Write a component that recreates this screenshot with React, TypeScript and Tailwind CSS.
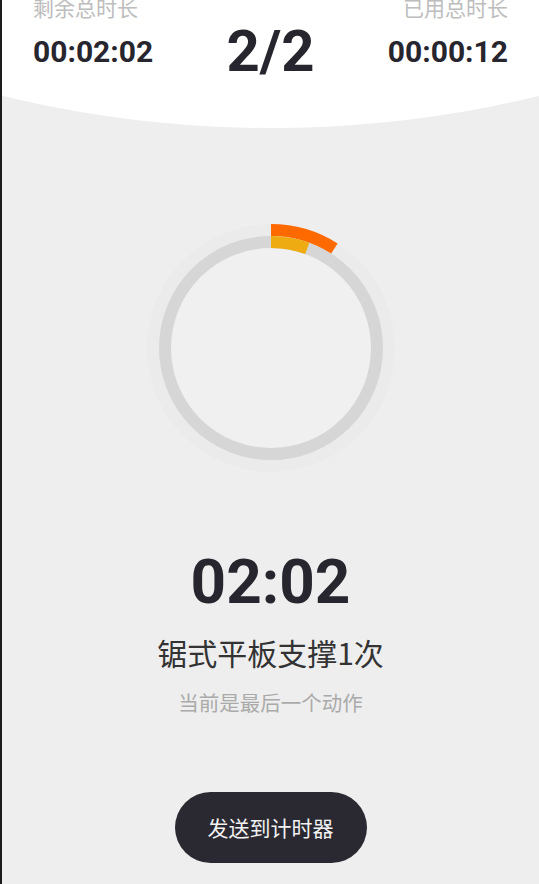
import React from "react";

function Ring() {
  return (
    <svg width="250" height="250" viewBox="0 0 250 250" className="block">
      <circle cx="125" cy="125" r="124" fill="#ebebeb" />
      <circle cx="125" cy="125" r="100" fill="#f0f0f0" />
      <circle cx="125" cy="125" r="106" fill="none" stroke="#d6d6d6" strokeWidth="12" />
      <path d="M125 7 A118 118 0 0 1 188.4 25.5" fill="none" stroke="#ff6a00" strokeWidth="12" />
      <path d="M125 19 A106 106 0 0 1 161.25 25.4" fill="none" stroke="#efac12" strokeWidth="12" />
    </svg>
  );
}

export default function App() {
  return (
    <div className="relative w-[539px] min-h-[884px] overflow-hidden bg-[#eeeeee] border-l-[2px] border-[#1c1c1c]">
      <div className="absolute left-1/2 -translate-x-1/2 top-[-2146px] w-[2274px] h-[2274px] rounded-full bg-white" />
      <div className="relative -mt-[3px] h-[131px] flex justify-between items-start px-[31px]">
        <div className="flex flex-col items-start">
          <div className="text-[21px] leading-[21px] text-[#bdbdbd] font-['Noto_Sans_CJK_SC','Noto_Sans',sans-serif]">剩余总时长</div>
          <div className="mt-[19px] text-[30px] leading-[30px] font-bold text-[#27262e] font-['Roboto','Liberation_Sans',sans-serif]">00:02:02</div>
        </div>
        <div className="mt-[25px] text-[58px] leading-[58px] font-bold text-[#27262e] font-['Roboto','Liberation_Sans',sans-serif]">2/2</div>
        <div className="flex flex-col items-end">
          <div className="text-[21px] leading-[21px] text-[#bdbdbd] font-['Noto_Sans_CJK_SC','Noto_Sans',sans-serif]">已用总时长</div>
          <div className="mt-[19px] text-[30px] leading-[30px] font-bold text-[#27262e] font-['Roboto','Liberation_Sans',sans-serif]">00:00:12</div>
        </div>
      </div>
      <div className="relative flex flex-col items-center">
        <div className="mt-[95px]">
          <Ring />
        </div>
        <div className="mt-[78px] text-[62px] leading-[62px] font-bold text-[#27262e] font-['Roboto','Liberation_Sans',sans-serif]">02:02</div>
        <div className="mt-[24px] text-[30px] leading-[30px] text-[#333333] font-['Noto_Sans_CJK_SC','Noto_Sans',sans-serif]">锯式平板支撑1次</div>
        <div className="mt-[25px] text-[20.5px] leading-[20px] text-[#aaaaaa] font-['Noto_Sans_CJK_SC','Noto_Sans',sans-serif]">当前是最后一个动作</div>
        <button className="mt-[80px] w-[192px] h-[71px] rounded-full bg-[#2a2932] text-[21px] text-[#f2f2f2] flex items-center justify-center font-['Noto_Sans_CJK_SC','Noto_Sans',sans-serif]">发送到计时器</button>
      </div>
    </div>
  );
}
